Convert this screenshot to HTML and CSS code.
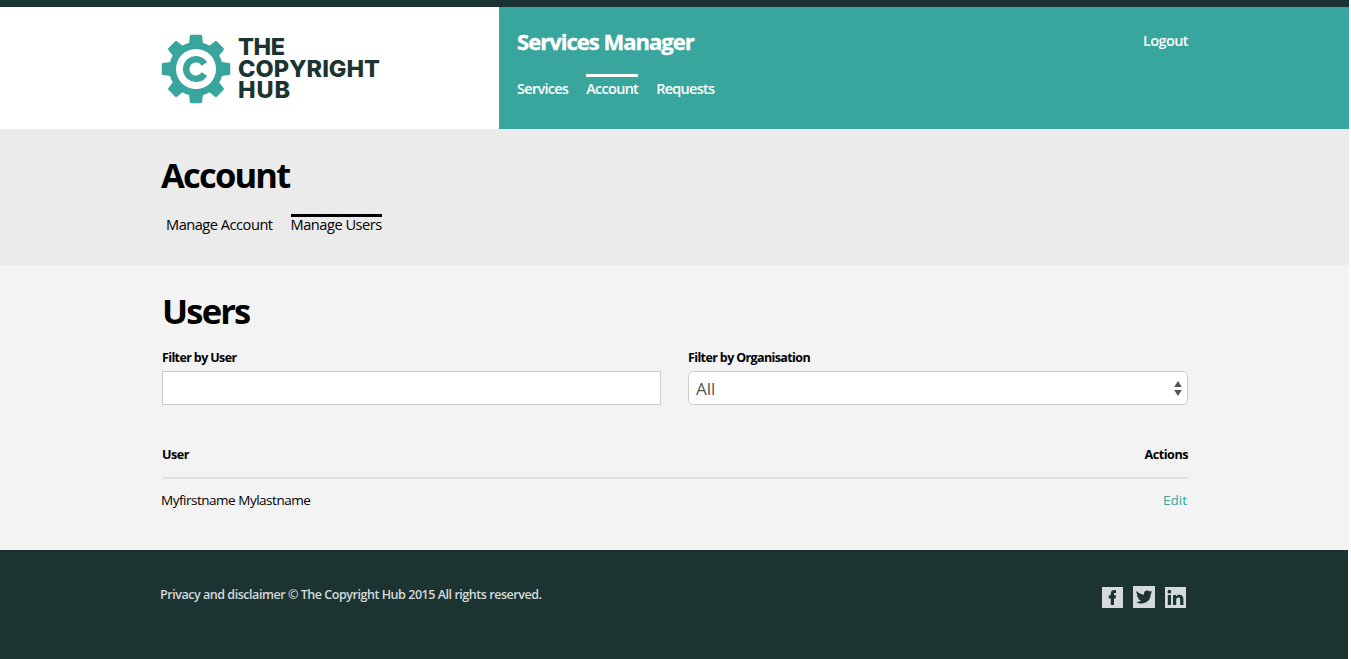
FILE: index.html
```html
<!DOCTYPE html>
<html lang="en">
<head>
<meta charset="utf-8">
<title>Users - Services Manager</title>
<link rel="stylesheet" href="styles.css">
</head>
<body>
<div class="page">
  <header class="header">
    <div class="brand">
      <svg class="gear" viewBox="-35 -35 70 70" width="70" height="70">
        <defs><path id="tooth" d="M-7.2 -24 L-6.1 -33 Q-5.9 -34.3 -4.5 -34.3 H4.5 Q5.9 -34.3 6.1 -33 L7.2 -24 Z"/></defs>
        <g class="teal">
          <circle r="27"/>
          <use href="#tooth"/><use href="#tooth" transform="rotate(45)"/><use href="#tooth" transform="rotate(90)"/><use href="#tooth" transform="rotate(135)"/><use href="#tooth" transform="rotate(180)"/><use href="#tooth" transform="rotate(225)"/><use href="#tooth" transform="rotate(270)"/><use href="#tooth" transform="rotate(315)"/>
        </g>
        <circle r="20" fill="#fff"/>
        <path class="logo-c" d="M8.4 -5 A9.8 9.8 0 1 0 8.4 5"/>
      </svg>
      <svg class="wordmark" width="144" height="70" viewBox="0 0 144 70">
        <text x="0" y="22.3" textLength="47">THE</text>
        <text x="0" y="43.8" textLength="142">COPYRIGHT</text>
        <text x="0" y="65.3" textLength="52">HUB</text>
      </svg>
    </div>
    <div class="manager">
      <div>
        <div class="app-title"><span>Services Manager</span></div>
        <nav class="nav"><a>Services</a><a class="on">Account</a><a>Requests</a></nav>
      </div>
      <a class="logout">Logout</a>
    </div>
  </header>
  <section class="sub">
    <h1>Account</h1>
    <nav class="tabs"><a>Manage Account</a><a class="on">Manage Users</a></nav>
  </section>
  <main class="main">
    <h2>Users</h2>
    <div class="filters">
      <label><span>Filter by User</span><input class="field" type="text"></label>
      <label><span>Filter by Organisation</span>
        <div class="field select"><b>All</b>
          <svg width="8" height="15" viewBox="0 0 8 15"><path d="M4 0 L7.8 6 H.2Z M4 15 L7.8 9 H.2Z"/></svg>
        </div>
      </label>
    </div>
    <div class="row head"><span>User</span><span>Actions</span></div>
    <div class="row"><span class="name">Myfirstname Mylastname</span><a class="edit">Edit</a></div>
  </main>
  <footer class="footer">
    <p>Privacy and disclaimer © The Copyright Hub 2015 All rights reserved.</p>
    <div class="social">
      <svg width="21" height="21" viewBox="0 0 21 21"><rect width="21" height="21"/><path d="M8.8 18V11.4H6.8V8.3H8.8V6.8C8.8 4.2 10 3 12.4 3H14V6H13C12.2 6 12 6.4 12 7.1V8.3H14L13.7 11.4H12V18Z"/></svg>
      <svg width="22" height="22" viewBox="0 0 22 22"><rect width="22" height="22"/><path d="M3.7 5C5.6 7.2 8 8.5 11 8.7C10.5 6 12.2 4.5 14.2 4.5C15.2 4.5 16.1 4.9 16.7 5.6L18.9 4.8L17.7 6.7L19.4 6.3L17.7 8C17.8 14 13.3 17.5 8.6 17.5C6.6 17.5 4.9 17 3.4 16C5.3 16.1 6.9 15.6 8.1 14.6C6.6 14.5 5.5 13.6 5.1 12.3H6.4C4.8 11.8 3.8 10.6 3.8 9L5.1 9.3C3.5 8.2 3 6.5 3.7 5Z"/></svg>
      <svg width="21" height="21" viewBox="0 0 21 21"><rect width="21" height="21"/><circle cx="4.4" cy="4.7" r="1.9"/><path d="M2.8 8H6V18H2.8ZM8 8H11V9.4C11.7 8.3 12.8 7.7 14.2 7.7C17.2 7.7 18.4 9.4 18.4 12.3V18H15.2V12.8C15.2 11.3 14.7 10.5 13.4 10.5C11.9 10.5 11.2 11.5 11.2 13V18H8Z"/></svg>
    </div>
  </footer>
</div>
</body>
</html>
```
FILE: styles.css
```css
* { box-sizing: border-box; }
body { margin: 0; background: #fff; font-family: "Open Sans", "Noto Sans", sans-serif; letter-spacing: -0.03em; color: #000; }
.page { width: 1349px; height: 659px; display: flex; flex-direction: column; border-top: 7px solid #1c3431; }
h1, h2, p { margin: 0; }
a, .row span, label span { white-space: nowrap; }
.header { height: 122px; display: flex; }
.brand { width: 499px; padding: 26px 0 0 161px; display: flex; gap: 7px; }
.gear { margin-top: 1px; }
.teal { fill: #39a69d; }
.logo-c { fill: none; stroke: #39a69d; stroke-width: 6.4; }
.wordmark { overflow: visible; }
.wordmark text { font: 800 23.5px Inter, sans-serif; letter-spacing: 0; fill: #1c3431; }
.manager { flex: 1; background: #39a69d; color: #fff; padding: 17px 161px 0 18px; display: flex; justify-content: space-between; align-items: flex-start; }
.app-title { font-size: 22px; font-weight: 700; letter-spacing: -0.045em; line-height: 34px; -webkit-text-stroke: 0.4px #fff; }
.nav { display: flex; gap: 18px; margin-top: 16px; font-size: 14.5px; font-weight: 600; letter-spacing: -0.05em; line-height: 24px; }
.nav a, .tabs a { border-top: 3px solid transparent; }
.nav .on { border-color: #fff; }
.logout { font-size: 14.5px; font-weight: 600; line-height: 34px; letter-spacing: -0.04em; }
.sub { height: 136px; background: #ebebeb; padding: 21px 161px 0; }
h1, h2 { font-size: 34.5px; font-weight: 700; letter-spacing: -0.052em; line-height: 50px; }
.tabs { display: flex; gap: 18px; padding-left: 5px; margin-top: 14px; font-size: 14.6px; line-height: 15px; }
.tabs .on { border-color: #000; }
.main { height: 285px; background: #f3f3f3; padding: 21px 161px 0 162px; }
.filters { display: grid; grid-template-columns: 499px 500px; gap: 27px; margin-top: 13px; font-size: 12.5px; font-weight: 700; letter-spacing: -0.05em; }
label span { display: block; line-height: 18px; margin-bottom: 4px; }
.field { display: flex; width: 100%; height: 34px; border: 1px solid #ccc; background: #fff; }
.select { border-radius: 5px; align-items: center; justify-content: space-between; padding: 0 5px 0 7px; }
.select b { font-size: 17px; font-weight: 400; letter-spacing: 0; color: #555; }
.select path { fill: #555; }
.row { display: flex; justify-content: space-between; font-size: 13.5px; line-height: 42px; }
.head { margin-top: 28px; height: 46px; border-bottom: 2px solid #e0e0e0; font-size: 12.6px; font-weight: 700; line-height: 44px; }
.name { margin-left: -1px; }
.edit { color: #39a69d; margin-right: 1px; letter-spacing: 0; }
.footer { width: 1348px; height: 109px; background: #1c3431; padding: 34px 162px 0 160px; display: flex; justify-content: space-between; align-items: flex-start; }
.footer p { font-size: 12.55px; font-weight: 600; line-height: 21px; color: #d6dadb; }
.social { display: flex; gap: 10px; align-items: flex-end; padding-top: 2px; }
.social rect { fill: #d6dadb; }
.social path, .social circle { fill: #1c3431; }
```
